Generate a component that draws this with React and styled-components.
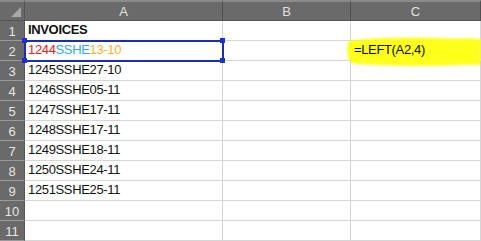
import styled, { createGlobalStyle } from 'styled-components';

const GlobalStyle = createGlobalStyle`
    html, body {
        margin: 0;
        padding: 0;
        background: #ffffff;
    }
    body {
        font-family: 'Liberation Sans', Arial, sans-serif;
    }
`;

const COLUMNS = ['A', 'B', 'C'];

const ROWS = [
    { a: [{ text: 'INVOICES' }], bold: true },
    {
        a: [
            { text: '1244', color: '#e2231f' },
            { text: 'SSHE', color: '#3aa7dc' },
            { text: '13-10', color: '#f2b535' },
        ],
        selected: true,
        c: '=LEFT(A2,4)',
    },
    { a: [{ text: '1245SSHE27-10' }] },
    { a: [{ text: '1246SSHE05-11' }] },
    { a: [{ text: '1247SSHE17-11' }] },
    { a: [{ text: '1248SSHE17-11' }] },
    { a: [{ text: '1249SSHE18-11' }] },
    { a: [{ text: '1250SSHE24-11' }] },
    { a: [{ text: '1251SSHE25-11' }] },
    {},
    {},
];

const Sheet = styled.div`
    display: grid;
    grid-template-columns: 25px 198px 128px 130px;
    grid-template-rows: 21px repeat(11, 20px);
    width: 481px;
    height: 241px;
    overflow: hidden;
`;

const Corner = styled.div`
    position: relative;
    background: #6a6a6a;
    border-top: 2px solid #8a8a8a;
    border-right: 1px solid #555;
    border-bottom: 1px solid #555;
    box-sizing: border-box;

    &::after {
        content: '';
        position: absolute;
        right: 3px;
        bottom: 3px;
        width: 0;
        height: 0;
        border-left: 10px solid transparent;
        border-bottom: 10px solid #a8a8a8;
    }
`;

const ColHeader = styled.div`
    display: flex;
    align-items: center;
    justify-content: center;
    background: #6a6a6a;
    border-top: 2px solid #8a8a8a;
    border-right: 1px solid #4f4f4f;
    border-bottom: 1px solid #555;
    box-sizing: border-box;
    color: #e2e2e2;
    font-size: 13px;
    padding-top: 1px;
`;

const RowHeader = styled.div`
    display: flex;
    align-items: center;
    justify-content: center;
    background: #6a6a6a;
    border-bottom: 1px solid #9a9a9a;
    border-right: 1px solid #555;
    box-sizing: border-box;
    color: #e6e6e6;
    font-size: 13px;
    padding-top: 1px;
`;

const Cell = styled.div`
    position: relative;
    display: flex;
    align-items: flex-end;
    padding: 0 0 2px 3px;
    border-right: 1px solid #d6d6d6;
    border-bottom: 1px solid #d6d6d6;
    box-sizing: border-box;
    font-size: 13px;
    letter-spacing: -0.35px;
    line-height: 16px;
    color: #111;
    font-weight: ${(props) => (props.$bold ? 700 : 400)};
    white-space: nowrap;
    ${(props) =>
        props.$selected &&
        `
        outline: 2px solid #1b2fa8;
        outline-offset: -1px;
        z-index: 2;
    `}
`;

const Handle = styled.span`
    position: absolute;
    width: 5px;
    height: 5px;
    background: #1b2fd0;
    ${(props) => (props.$top ? 'top: -3px;' : 'bottom: -3px;')}
    ${(props) => (props.$left ? 'left: -3px;' : 'right: -3px;')}
`;

const Highlight = styled.svg`
    position: absolute;
    left: -6px;
    top: -6px;
    width: 136px;
    height: 32px;
    z-index: 0;
`;

const CellText = styled.span`
    position: relative;
    z-index: 1;
    color: ${(props) => props.color || 'inherit'};
`;

const Marker = () => (
    <Highlight viewBox="0 0 136 32">
        <defs>
            <filter id="soft" x="-5%" y="-20%" width="110%" height="140%">
                <feGaussianBlur stdDeviation="0.8" />
            </filter>
        </defs>
        <path
            d="M4 6 C20 3, 60 2, 90 3 C110 4, 126 3, 136 4 L136 30 C120 29, 100 31, 80 31 C50 31, 20 30, 6 28 C2 24, 1 12, 4 6 Z"
            fill="#ffff1a"
            filter="url(#soft)"
        />
    </Highlight>
);

export default function App() {
    return (
        <>
            <GlobalStyle />
            <Sheet>
                <Corner />
                {COLUMNS.map((col) => (
                    <ColHeader key={col}>{col}</ColHeader>
                ))}
                {ROWS.map((row, i) => (
                    <Row key={i} index={i + 1} row={row} />
                ))}
            </Sheet>
        </>
    );
}

const Row = ({ index, row }) => (
    <>
        <RowHeader>{index}</RowHeader>
        <Cell $bold={row.bold} $selected={row.selected}>
            {(row.a || []).map((part, k) => (
                <CellText key={k} color={part.color}>
                    {part.text}
                </CellText>
            ))}
            {row.selected && (
                <>
                    <Handle $top $left />
                    <Handle $left />
                    <Handle $top />
                    <Handle />
                </>
            )}
        </Cell>
        <Cell />
        <Cell>
            {row.c && (
                <>
                    <Marker />
                    <CellText>{row.c}</CellText>
                </>
            )}
        </Cell>
    </>
);
